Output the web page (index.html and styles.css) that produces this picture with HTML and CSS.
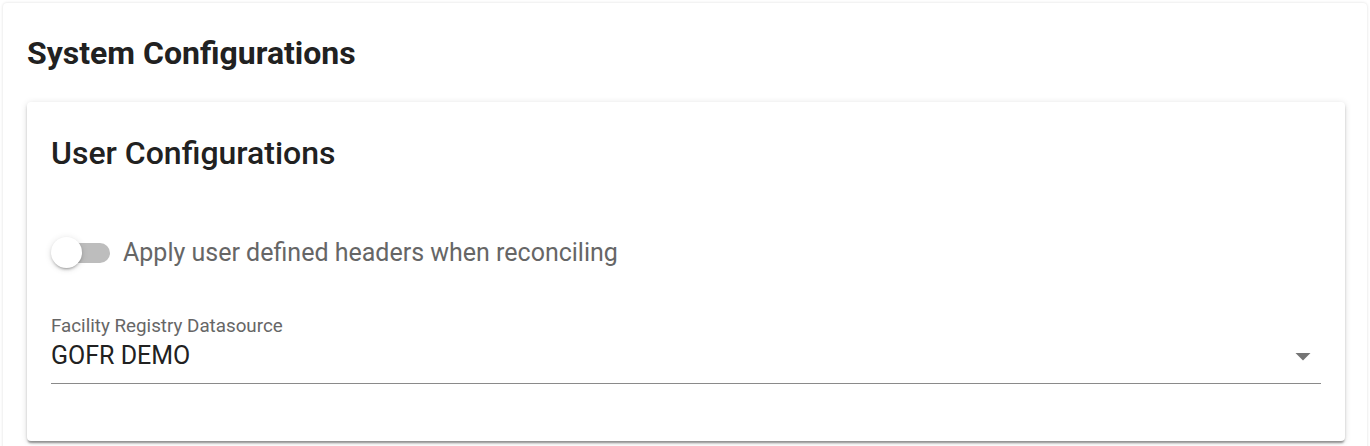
FILE: index.html
```html
<!DOCTYPE html>
<html lang="en">
<head>
  <meta charset="UTF-8">
  <meta name="viewport" content="width=device-width, initial-scale=1.0">
  <title>System Configurations</title>
  <link rel="stylesheet" href="styles.css">
</head>
<body>
  <div class="page-card">
    <h1 class="page-title">System Configurations</h1>

    <div class="card">
      <h2 class="card-title">User Configurations</h2>

      <div class="switch-row">
        <div class="switch">
          <div class="switch-track"></div>
          <div class="switch-thumb"></div>
        </div>
        <span class="switch-label">Apply user defined headers when reconciling</span>
      </div>

      <div class="select">
        <div class="select-label">Facility Registry Datasource</div>
        <div class="select-field">
          <span class="select-value">GOFR DEMO</span>
          <svg class="select-arrow" viewBox="0 0 24 24" width="36" height="36">
            <path d="M7 10l5 5 5-5z" fill="#757575"/>
          </svg>
        </div>
      </div>
    </div>
  </div>
</body>
</html>
```

FILE: styles.css
```css
body {
  font-family: Roboto, "Liberation Sans", Arial, sans-serif;
  background-color: #fff;
  margin: 0;
  padding: 3px 3px 0 3px;
  height: 446px;
  box-sizing: border-box;
  overflow: hidden;
}
.page-card {
  background-color: #fff;
  border-radius: 4px;
  box-shadow: 0 0 3px rgba(0, 0, 0, 0.14);
  padding: 32px 22px 40px 24px;
  min-height: 500px;
}
.page-title {
  margin: 0;
  font-size: 32px;
  line-height: 36px;
  font-weight: 700;
  color: #212121;
}
.card {
  margin-top: 31px;
  background-color: #fff;
  border-radius: 4px;
  padding: 33px 24px 57px 24px;
  box-shadow: 0 3px 2px -1px rgba(0, 0, 0, 0.3), 0 2px 3px rgba(0, 0, 0, 0.14), 0 1px 7px rgba(0, 0, 0, 0.12);
}
.card-title {
  margin: 0;
  font-size: 32px;
  line-height: 36px;
  font-weight: 500;
  color: #212121;
}
.switch-row {
  display: flex;
  align-items: center;
  gap: 12px;
  margin-top: 64px;
}
.switch {
  position: relative;
  width: 60px;
  height: 36px;
}
.switch-track {
  position: absolute;
  left: 3px;
  right: 1px;
  top: 8px;
  height: 20px;
  border-radius: 10px;
  background-color: #bdbdbd;
}
.switch-thumb {
  position: absolute;
  left: 0;
  top: 2px;
  width: 31px;
  height: 31px;
  border-radius: 50%;
  background-color: #fff;
  box-shadow: 0 3px 2px -2px rgba(0, 0, 0, 0.2), 0 2px 3px rgba(0, 0, 0, 0.14), 0 1px 7px rgba(0, 0, 0, 0.12);
}
.switch-label {
  font-size: 25px;
  line-height: 36px;
  color: #666;
}
.select {
  margin-top: 43px;
}
.select-label {
  font-size: 18.8px;
  line-height: 24px;
  color: #666;
}
.select-field {
  display: flex;
  align-items: center;
  justify-content: space-between;
  padding: 0 0 9px 0;
  border-bottom: 1px solid #8a8a8a;
}
.select-value {
  font-size: 25px;
  line-height: 32px;
  color: #212121;
}
.select-arrow {
  display: block;
}
```
